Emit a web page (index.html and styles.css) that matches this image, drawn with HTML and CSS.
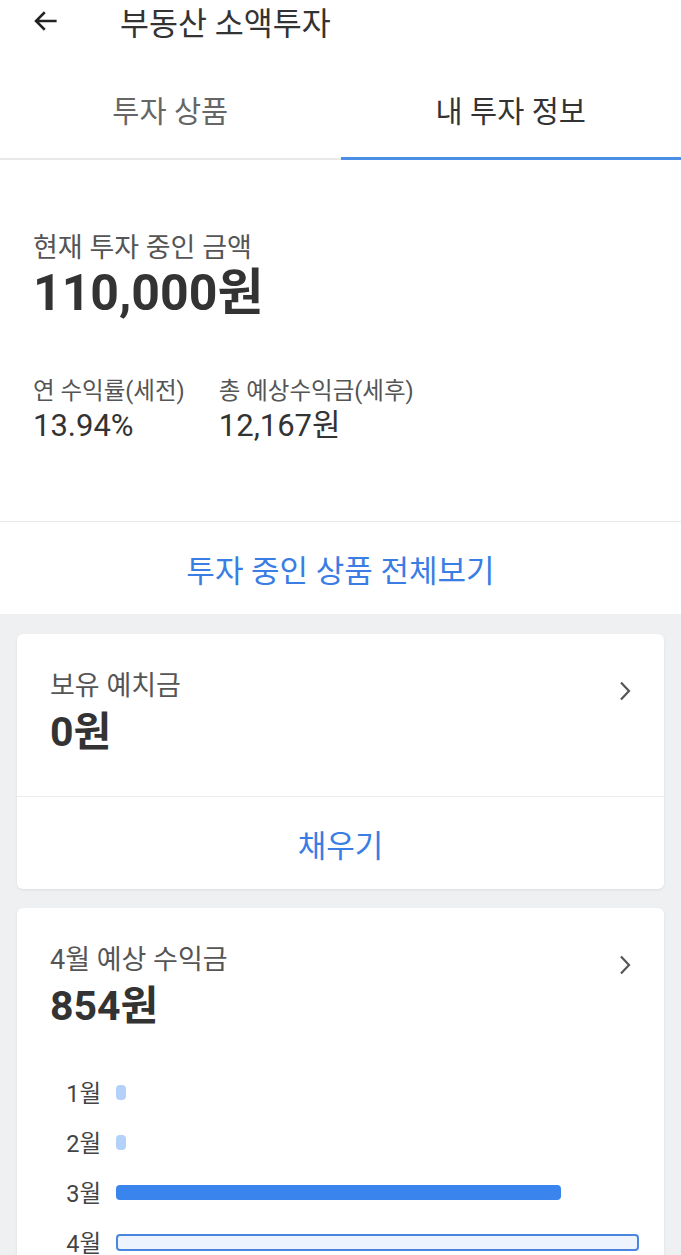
FILE: index.html
```html
<!DOCTYPE html>
<html lang="ko">
<head>
    <meta charset="UTF-8">
    <meta name="viewport" content="width=device-width, initial-scale=1.0">
    <title>부동산 소액투자</title>
    <link rel="stylesheet" href="styles.css">
</head>
<body>
    <header class="topbar">
        <svg class="back" viewBox="0 0 24 24" width="30" height="30">
            <path d="M20.5 12H4.5M11 5l-7 7 7 7" fill="none" stroke="#222" stroke-width="2"/>
        </svg>
        <h1 class="title">부동산 소액투자</h1>
    </header>

    <nav class="tabs">
        <div class="tab">투자 상품</div>
        <div class="tab active">내 투자 정보</div>
    </nav>

    <section class="summary">
        <div class="label">현재 투자 중인 금액</div>
        <div class="amount">110,000원</div>
        <div class="stats">
            <div class="stat">
                <div class="stat-label">연 수익률(세전)</div>
                <div class="stat-value">13.94%</div>
            </div>
            <div class="stat">
                <div class="stat-label">총 예상수익금(세후)</div>
                <div class="stat-value">12,167원</div>
            </div>
        </div>
    </section>

    <div class="link-row">투자 중인 상품 전체보기</div>

    <main class="cards">
        <div class="card">
            <div class="card-top">
                <div>
                    <div class="label">보유 예치금</div>
                    <div class="card-amount">0원</div>
                </div>
                <svg class="chevron" viewBox="0 0 16 24" width="16" height="24">
                    <path d="M4 3.5l8 8.5-8 8.5" fill="none" stroke="#555" stroke-width="2.2"/>
                </svg>
            </div>
            <div class="card-action">채우기</div>
        </div>

        <div class="card">
            <div class="card-top short">
                <div>
                    <div class="label">4월 예상 수익금</div>
                    <div class="card-amount">854원</div>
                </div>
                <svg class="chevron" viewBox="0 0 16 24" width="16" height="24">
                    <path d="M4 3.5l8 8.5-8 8.5" fill="none" stroke="#555" stroke-width="2.2"/>
                </svg>
            </div>
            <div class="chart">
                <div class="bar-row">
                    <span class="month">1월</span>
                    <div class="bar small" style="width: 10px"></div>
                </div>
                <div class="bar-row">
                    <span class="month">2월</span>
                    <div class="bar small" style="width: 10px"></div>
                </div>
                <div class="bar-row">
                    <span class="month">3월</span>
                    <div class="bar full" style="width: 445px"></div>
                </div>
                <div class="bar-row">
                    <span class="month">4월</span>
                    <div class="bar current" style="width: 523px"></div>
                </div>
            </div>
        </div>
    </main>
</body>
</html>
```

FILE: styles.css
```css
body {
    margin: 0;
    font-family: 'Roboto', 'Noto Sans CJK KR', sans-serif;
    background-color: #fff;
    color: #333;
}

.topbar {
    display: flex;
    align-items: center;
    height: 42px;
    padding-left: 31px;
}

.back {
    display: block;
}

.title {
    margin: 0 0 0 59px;
    font-size: 31.5px;
    font-weight: 400;
    color: #333;
}

.tabs {
    display: flex;
    height: 118px;
    border-bottom: 2px solid #e8e8e8;
    box-sizing: border-box;
}

.tab {
    flex: 1;
    display: flex;
    align-items: center;
    justify-content: center;
    padding-top: 18px;
    font-size: 29.5px;
    color: #666;
}

.tab.active {
    color: #333;
    border-bottom: 3px solid #4a8ee6;
    margin-bottom: -2px;
}

.summary {
    padding: 73px 33px 78px;
    border-bottom: 1px solid #e8e8e8;
}

.label {
    font-size: 27px;
    line-height: 31px;
    color: #555;
}

.amount {
    font-size: 50px;
    line-height: 58px;
    font-weight: 700;
    color: #333;
}

.stats {
    display: flex;
    gap: 34px;
    margin-top: 55px;
}

.stat-label {
    font-size: 23.5px;
    line-height: 28px;
    color: #555;
}

.stat-value {
    margin-top: 3px;
    font-size: 31px;
    line-height: 35px;
    font-weight: 400;
    color: #333;
}

.link-row {
    height: 92px;
    display: flex;
    align-items: center;
    justify-content: center;
    font-size: 31px;
    color: #3a7de4;
}

.cards {
    background-color: #eff0f2;
    padding: 20px 17px;
    display: flex;
    flex-direction: column;
    gap: 19px;
    min-height: 660px;
}

.card {
    background: #fff;
    border-radius: 6px;
    box-shadow: 0 1px 3px rgba(0, 0, 0, 0.08);
}

.card-top {
    display: flex;
    justify-content: space-between;
    align-items: flex-start;
    height: 163px;
    padding: 37px 31px 0 33px;
    box-sizing: border-box;
    border-bottom: 1px solid #ebebeb;
}

.card-top.short {
    height: auto;
    border-bottom: none;
}

.chevron {
    margin-top: 8px;
}

.card-amount {
    margin-top: 5px;
    font-size: 41px;
    line-height: 50px;
    font-weight: 700;
    color: #333;
}

.card-action {
    height: 92px;
    display: flex;
    align-items: center;
    justify-content: center;
    font-size: 31px;
    color: #3a7de4;
}

.chart {
    padding: 47px 0 20px 48px;
    display: flex;
    flex-direction: column;
    gap: 22px;
}

.bar-row {
    display: flex;
    align-items: center;
    gap: 15px;
    height: 28px;
}

.month {
    width: 36px;
    text-align: right;
    font-size: 23.5px;
    color: #444;
}

.bar {
    height: 15px;
    border-radius: 4px;
    box-sizing: border-box;
}

.bar.small {
    background: #b4d1fa;
}

.bar.full {
    background: #3a84ee;
}

.bar.current {
    height: 17px;
    background: #eef4fd;
    border: 2px solid #4a86e0;
}
```
